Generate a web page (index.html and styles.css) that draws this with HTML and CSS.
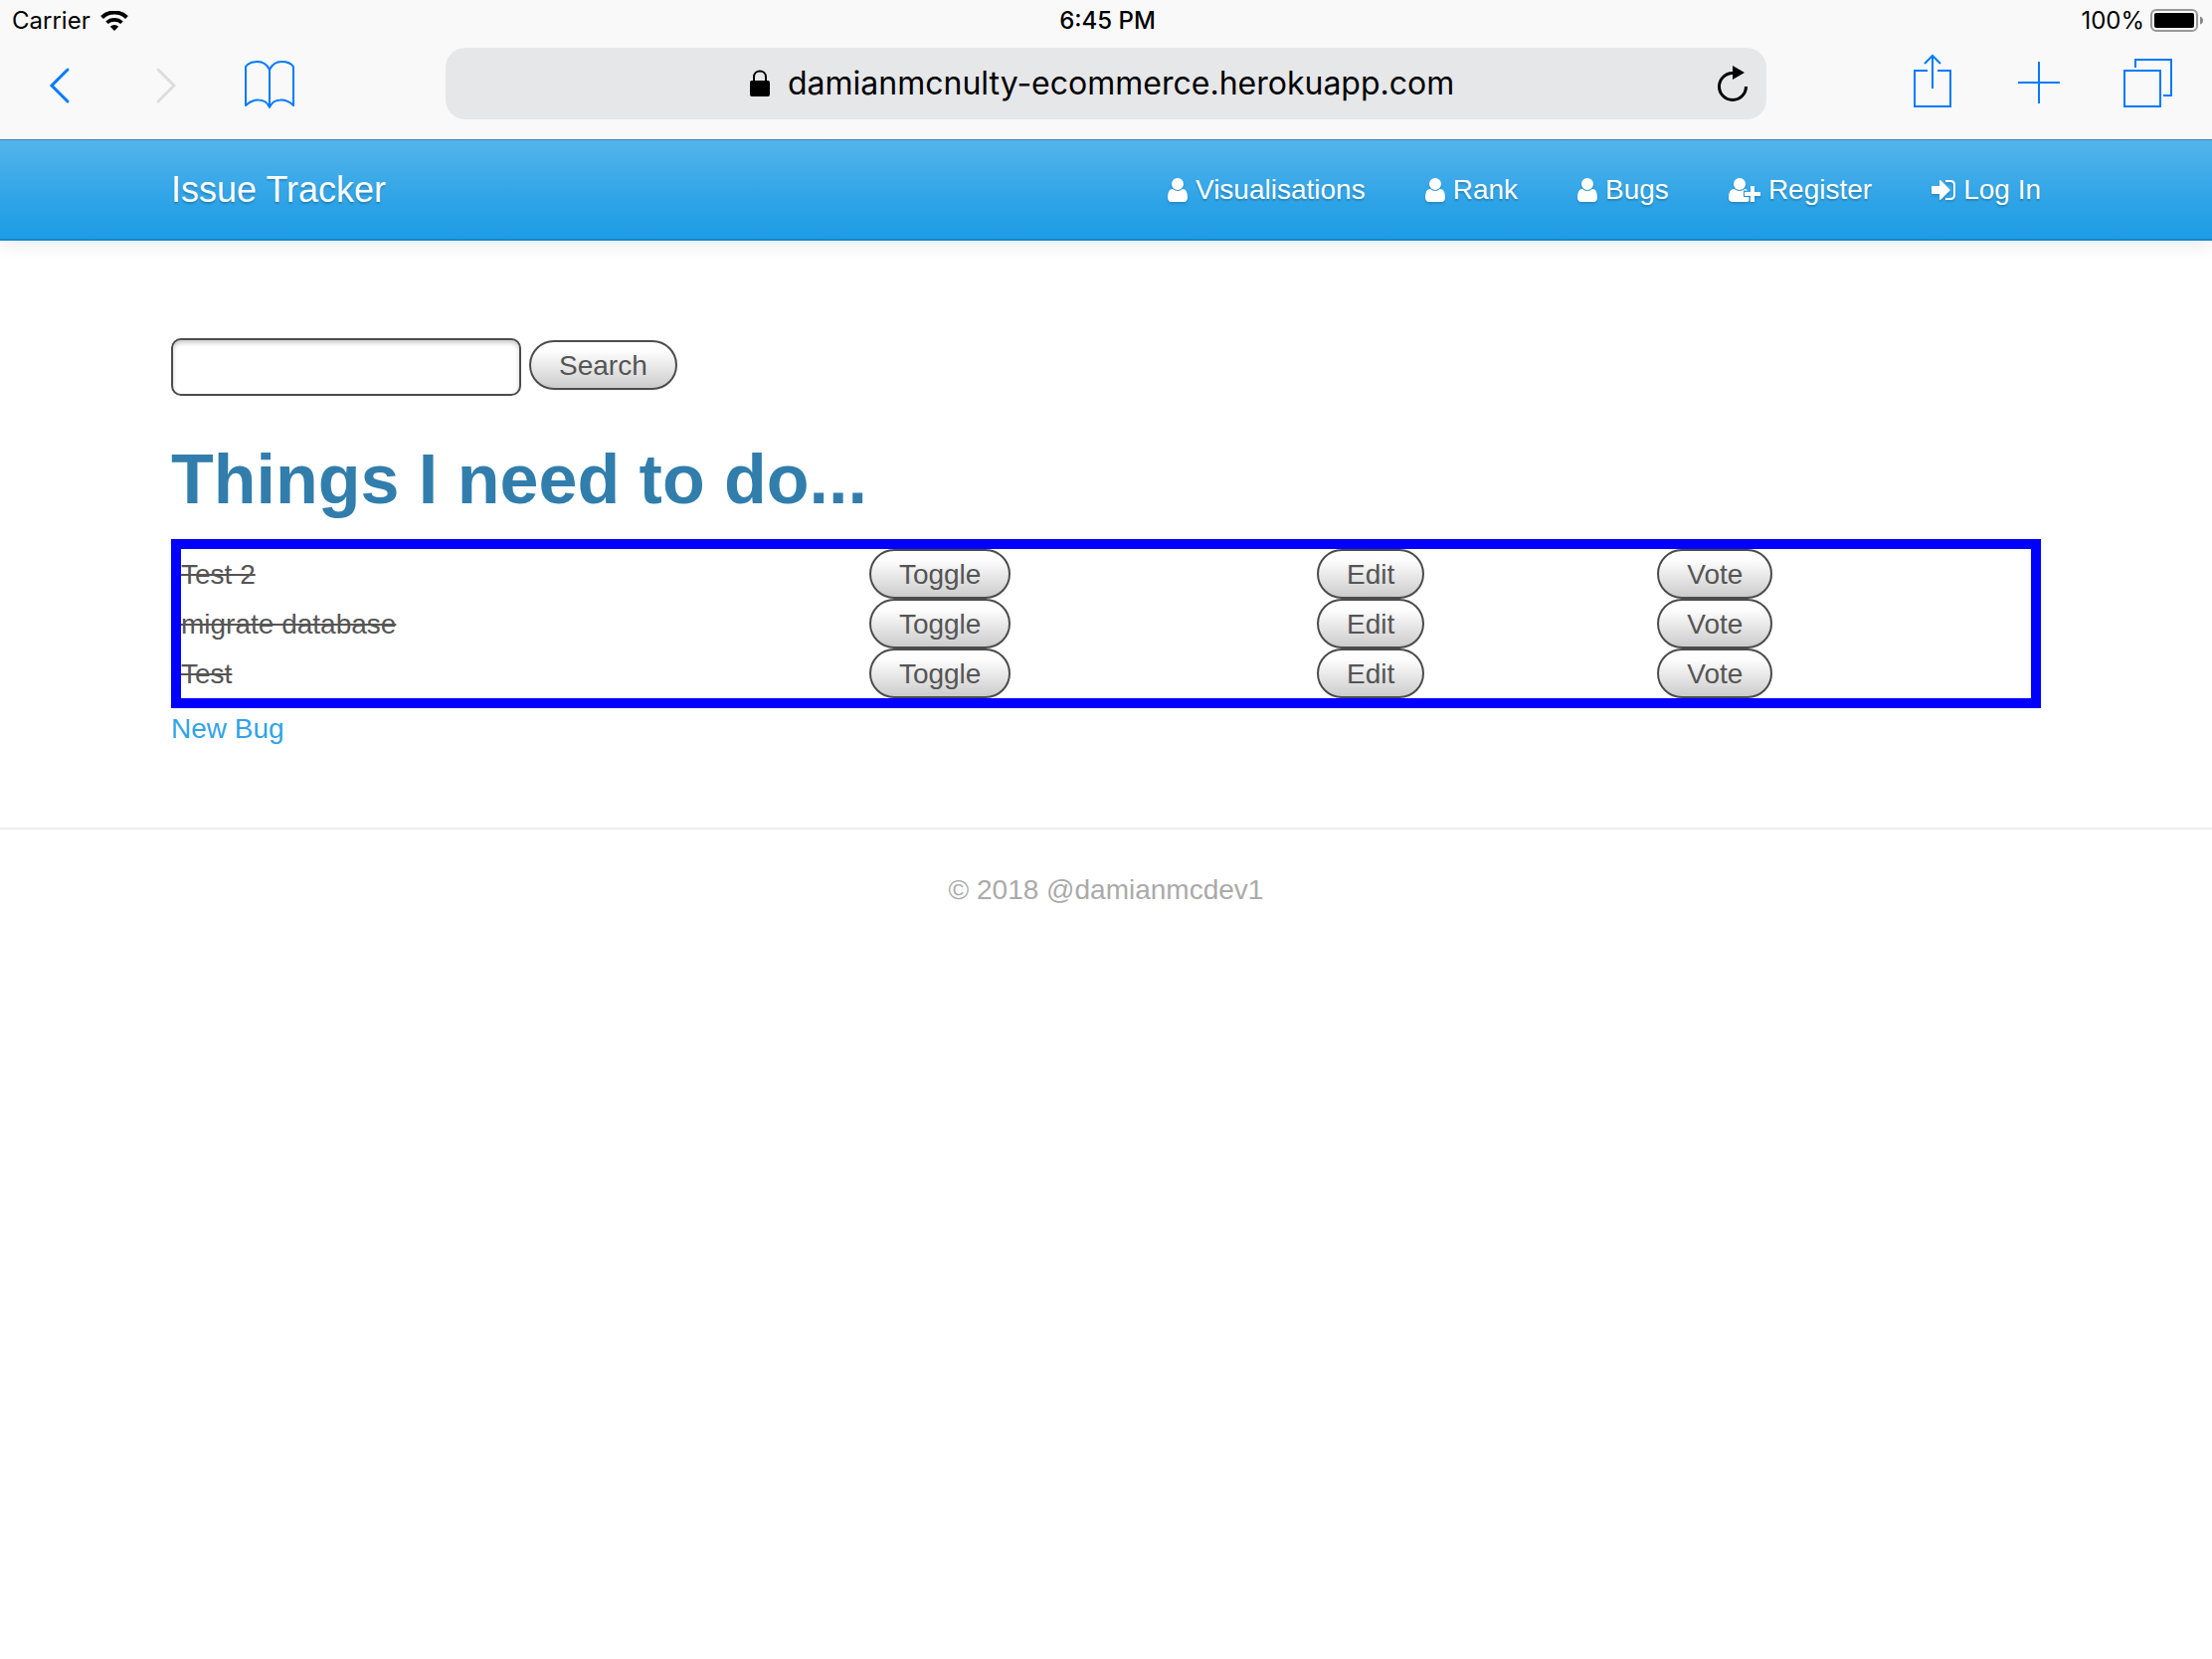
FILE: index.html
```html
<!DOCTYPE html>
<html lang="en">
<head>
<meta charset="utf-8">
<meta name="viewport" content="width=device-width, initial-scale=1">
<title>Issue Tracker</title>
<link rel="stylesheet" href="styles.css">
</head>
<body>
<div class="browser">
  <div class="status">
    <div class="status-side">
      <span>Carrier</span>
      <svg class="wifi" width="28" height="20" viewBox="0 0 28 20" aria-hidden="true">
        <path d="M1.500 6.500A18 18 0 0 1 26.500 6.500" fill="none" stroke="#000" stroke-width="4"/>
        <path d="M6.500 11.800A11 11 0 0 1 21.500 11.800" fill="none" stroke="#000" stroke-width="3.600"/>
        <path d="M14 20L9.800 15.800A6 6 0 0 1 18.200 15.800Z"/>
      </svg>
    </div>
    <span class="time">6:45 PM</span>
    <div class="status-side status-right">
      <span>100%</span>
      <svg width="53" height="24" viewBox="0 0 53 24" aria-hidden="true">
        <rect x="1" y="1" width="46" height="21" rx="5" fill="none" stroke="#999" stroke-width="2"/>
        <rect x="4" y="4" width="40" height="15" rx="2"/>
        <path d="M50 7.500Q53 8.500 53 11.500T50 15.500Z" fill="#888"/>
      </svg>
    </div>
  </div>
  <div class="toolbar">
    <div class="tools tools-left">
      <button class="tool" type="button" aria-label="Back"><svg width="52" height="72" viewBox="0 0 52 72"><path d="M34 22L18 38L34 54" stroke-width="3" stroke-linecap="round"/></svg></button>
      <button class="tool tool-off" type="button" aria-label="Forward"><svg width="52" height="72" viewBox="0 0 52 72"><path d="M19 22L35 38L19 54" stroke-width="3" stroke-linecap="round"/></svg></button>
      <button class="tool" type="button" aria-label="Bookmarks"><svg width="52" height="72" viewBox="0 0 52 72"><path d="M25 60V22C22 16 17 14 13 14C8 14 3 16 1 19V58C8 51 21 50 25 60C29 50 42 51 49 58V19C47 16 42 14 37 14C33 14 28 16 25 22" stroke-width="2" stroke-linejoin="round"/></svg></button>
    </div>
    <div class="address">
      <svg class="lock" width="20" height="28" viewBox="0 0 20 28" aria-hidden="true"><rect y="11" width="20" height="16" rx="2"/><path d="M4 12V7.500C4 -0.500 16 -0.500 16 7.500V12" fill="none" stroke="#000" stroke-width="2"/></svg>
      <input class="url" type="text" aria-label="Address" value="damianmcnulty-ecommerce.herokuapp.com">
      <button class="reload" type="button" aria-label="Reload"><svg width="32" height="36" viewBox="0 0 32 36"><path d="M16 7.500A13.500 13.500 0 1 0 29.500 21" fill="none" stroke="#000" stroke-width="3"/><path d="M16 0L28 7L16 14Z"/></svg></button>
    </div>
    <div class="tools tools-right">
      <button class="tool" type="button" aria-label="Share"><svg width="52" height="72" viewBox="0 0 52 72"><path d="M21 23H8V59H44V23H31M26 41V9M18 16L26 8L34 16" stroke-width="2"/></svg></button>
      <button class="tool" type="button" aria-label="New tab"><svg width="52" height="72" viewBox="0 0 52 72"><path d="M4 35H46M25 14V56" stroke-width="2"/></svg></button>
      <button class="tool" type="button" aria-label="Tabs"><svg width="52" height="72" viewBox="0 0 52 72"><path d="M3 23H39V59H3ZM14 20V12H50V48H42" stroke-width="2"/></svg></button>
    </div>
  </div>
</div>

<svg class="defs" width="0" height="0" aria-hidden="true">
  <symbol id="user" viewBox="256 128 1280 1536"><path d="M1536 1399q0 109-62.500 187t-150.500 78H469q-88 0-150.500-78T256 1399q0-85 8.500-160.500t31.500-152 58.500-131 94-89T583 832q131 128 313 128t313-128q76 0 134.500 34.500t94 89 58.500 131 31.500 152 8.500 160.500zm-256-887q0 159-112.500 271.500T896 896 624.500 783.500 512 512t112.500-271.500T896 128t271.500 112.500T1280 512z"/></symbol>
</svg>

<header class="navbar">
  <div class="container nav-row">
    <a class="brand" href="#">Issue Tracker</a>
    <nav class="nav">
      <a class="nav-link" href="#"><svg width="20" height="24"><use href="#user"/></svg>Visualisations</a>
      <a class="nav-link" href="#"><svg width="20" height="24"><use href="#user"/></svg>Rank</a>
      <a class="nav-link" href="#"><svg width="20" height="24"><use href="#user"/></svg>Bugs</a>
      <a class="nav-link" href="#"><svg width="32" height="24" viewBox="0 0 32 24"><circle cx="11" cy="6" r="6"/><path d="M5.500 11Q11 15 16.500 11Q18 11 19.500 12.500H15V19H20.500V23.200Q19.500 24 18 24H4Q0 24 0 19.500Q0 11 5.500 11Z"/><path d="M22 8H26V14H32V18H26V24H22V18H16V14H22Z"/></svg>Register</a>
      <a class="nav-link" href="#"><svg width="24" height="24" viewBox="0 0 24 24"><path d="M0 8.500Q0 8 1 8H8V3Q8 1.500 9.500 2.500L18.500 11.500Q19 12 18.500 12.500L9.500 21.500Q8 22.500 8 21V16H1Q0 16 0 15Z"/><path d="M14 3H19Q23 3 23 7V17Q23 21 19 21H14" fill="none" stroke="#fff" stroke-width="2"/></svg>Log In</a>
    </nav>
  </div>
</header>

<main class="container content">
  <form class="search">
    <input class="search-box" type="text" aria-label="Search bugs">
    <button class="btn" type="button">Search</button>
  </form>
  <h1 class="title">Things I need to do...</h1>
  <table class="bugs">
    <colgroup><col class="col-name"><col class="col-toggle"><col class="col-edit"><col></colgroup>
    <tbody>
      <tr><td class="name"><s>Test 2</s></td><td><button class="btn" type="button">Toggle</button></td><td><button class="btn" type="button">Edit</button></td><td><button class="btn" type="button">Vote</button></td></tr>
      <tr><td class="name"><s>migrate database</s></td><td><button class="btn" type="button">Toggle</button></td><td><button class="btn" type="button">Edit</button></td><td><button class="btn" type="button">Vote</button></td></tr>
      <tr><td class="name"><s>Test</s></td><td><button class="btn" type="button">Toggle</button></td><td><button class="btn" type="button">Edit</button></td><td><button class="btn" type="button">Vote</button></td></tr>
    </tbody>
  </table>
  <a class="new-bug" href="#">New Bug</a>
</main>

<footer class="footer">© 2018 @damianmcdev1</footer>
</body>
</html>
```
FILE: styles.css
```css
* { box-sizing: border-box; }

body {
  margin: 0;
  background: #fff;
  color: #555;
  font: 28px/40px "Liberation Sans", Arial, sans-serif;
}

button, input { font: inherit; color: inherit; }

.defs { display: block; }

/* Browser chrome */
.browser {
  background: #f9f9f9;
  color: #000;
  font-family: Inter, sans-serif;
}

.status {
  display: grid;
  grid-template-columns: 1fr auto 1fr;
  height: 40px;
  padding: 1px 9px 0 12px;
  font-size: 24px;
}

.status-side { display: flex; align-items: center; gap: 10px; }
.status-right { justify-content: flex-end; gap: 6px; }
.time { font-weight: 500; }

.toolbar {
  display: flex;
  padding: 8px 0 20px;
}

.tools { display: flex; flex: 0 0 448px; }
.tools-left { gap: 54px; padding-left: 34px; }
.tools-right { gap: 56px; padding-right: 39px; justify-content: flex-end; }

.tool, .reload {
  display: block;
  padding: 0;
  border: 0;
  background: none;
}

.tool svg { display: block; fill: none; stroke: #007aff; }
.tool-off svg { stroke: #ddd; }

.address {
  display: flex;
  flex: 1;
  align-items: center;
  height: 72px;
  padding: 0 18px 0 306px;
  border-radius: 20px;
  background: #e6e7e9;
}

.lock { flex: none; margin-right: 18px; }

.url {
  flex: 1;
  min-width: 0;
  padding: 0;
  border: 0;
  background: none;
  font-size: 32px;
  line-height: 40px;
}

.reload svg { display: block; }

/* Site header */
.container {
  max-width: 1880px;
  margin: 0 auto;
}

.navbar {
  border-top: 1px solid #3d7ea6;
  border-bottom: 2px solid #178acc;
  background: linear-gradient(#54b4eb, #2fa4e7 60%, #1d9ce5);
  box-shadow: 0 2px 20px rgba(0, 0, 0, 0.1);
}

/* Keeps the bar's shadow from falling on the browser chrome */
.browser { position: relative; z-index: 1; }

.nav-row {
  display: flex;
  align-items: center;
  justify-content: space-between;
  height: 99px;
}

.brand, .nav-link {
  color: #fff;
  text-decoration: none;
  text-shadow: 0 2px 2px rgba(0, 0, 0, 0.2);
}

.brand { font-size: 36px; }
.nav { display: flex; gap: 60px; }
.nav-link { display: flex; align-items: center; gap: 8px; }
.nav-link svg { fill: #fff; filter: drop-shadow(0 2px 1px rgba(0, 0, 0, 0.15)); }

/* Page content */
.content { padding: 98px 0 78px; }

.search { display: flex; gap: 8px; }

.search-box {
  width: 352px;
  height: 58px;
  padding: 8px;
  border: 2px solid #4c4c4c;
  border-radius: 10px;
  background: #fff;
  box-shadow: inset 0 3px 4px rgba(0, 0, 0, 0.2);
}

.btn {
  display: block;
  height: 50px;
  padding: 2px 28px 0;
  border: 2px solid #4c4c4c;
  border-radius: 25px;
  background: linear-gradient(#fff, #fdfdfd 20%, #ccc);
  line-height: 44px;
}

.search .btn { margin-top: 2px; }

.title {
  margin: 42px 0 18px;
  color: #317eac;
  font-size: 70px;
  font-weight: 700;
  line-height: 84px;
}

.bugs {
  width: 100%;
  border: 10px solid #00f;
  border-spacing: 0;
  table-layout: fixed;
}

.bugs td { height: 50px; padding: 0; }
.bugs .name { padding-top: 2px; }
.col-name { width: 37.2%; }
.col-toggle { width: 24.2%; }
.col-edit { width: 18.4%; }

.new-bug {
  display: block;
  width: fit-content;
  color: #2fa4e7;
  line-height: 42px;
  text-decoration: none;
}

.footer {
  padding: 41px 0;
  border-top: 2px solid #eee;
  color: #aaa;
  text-align: center;
}
```
